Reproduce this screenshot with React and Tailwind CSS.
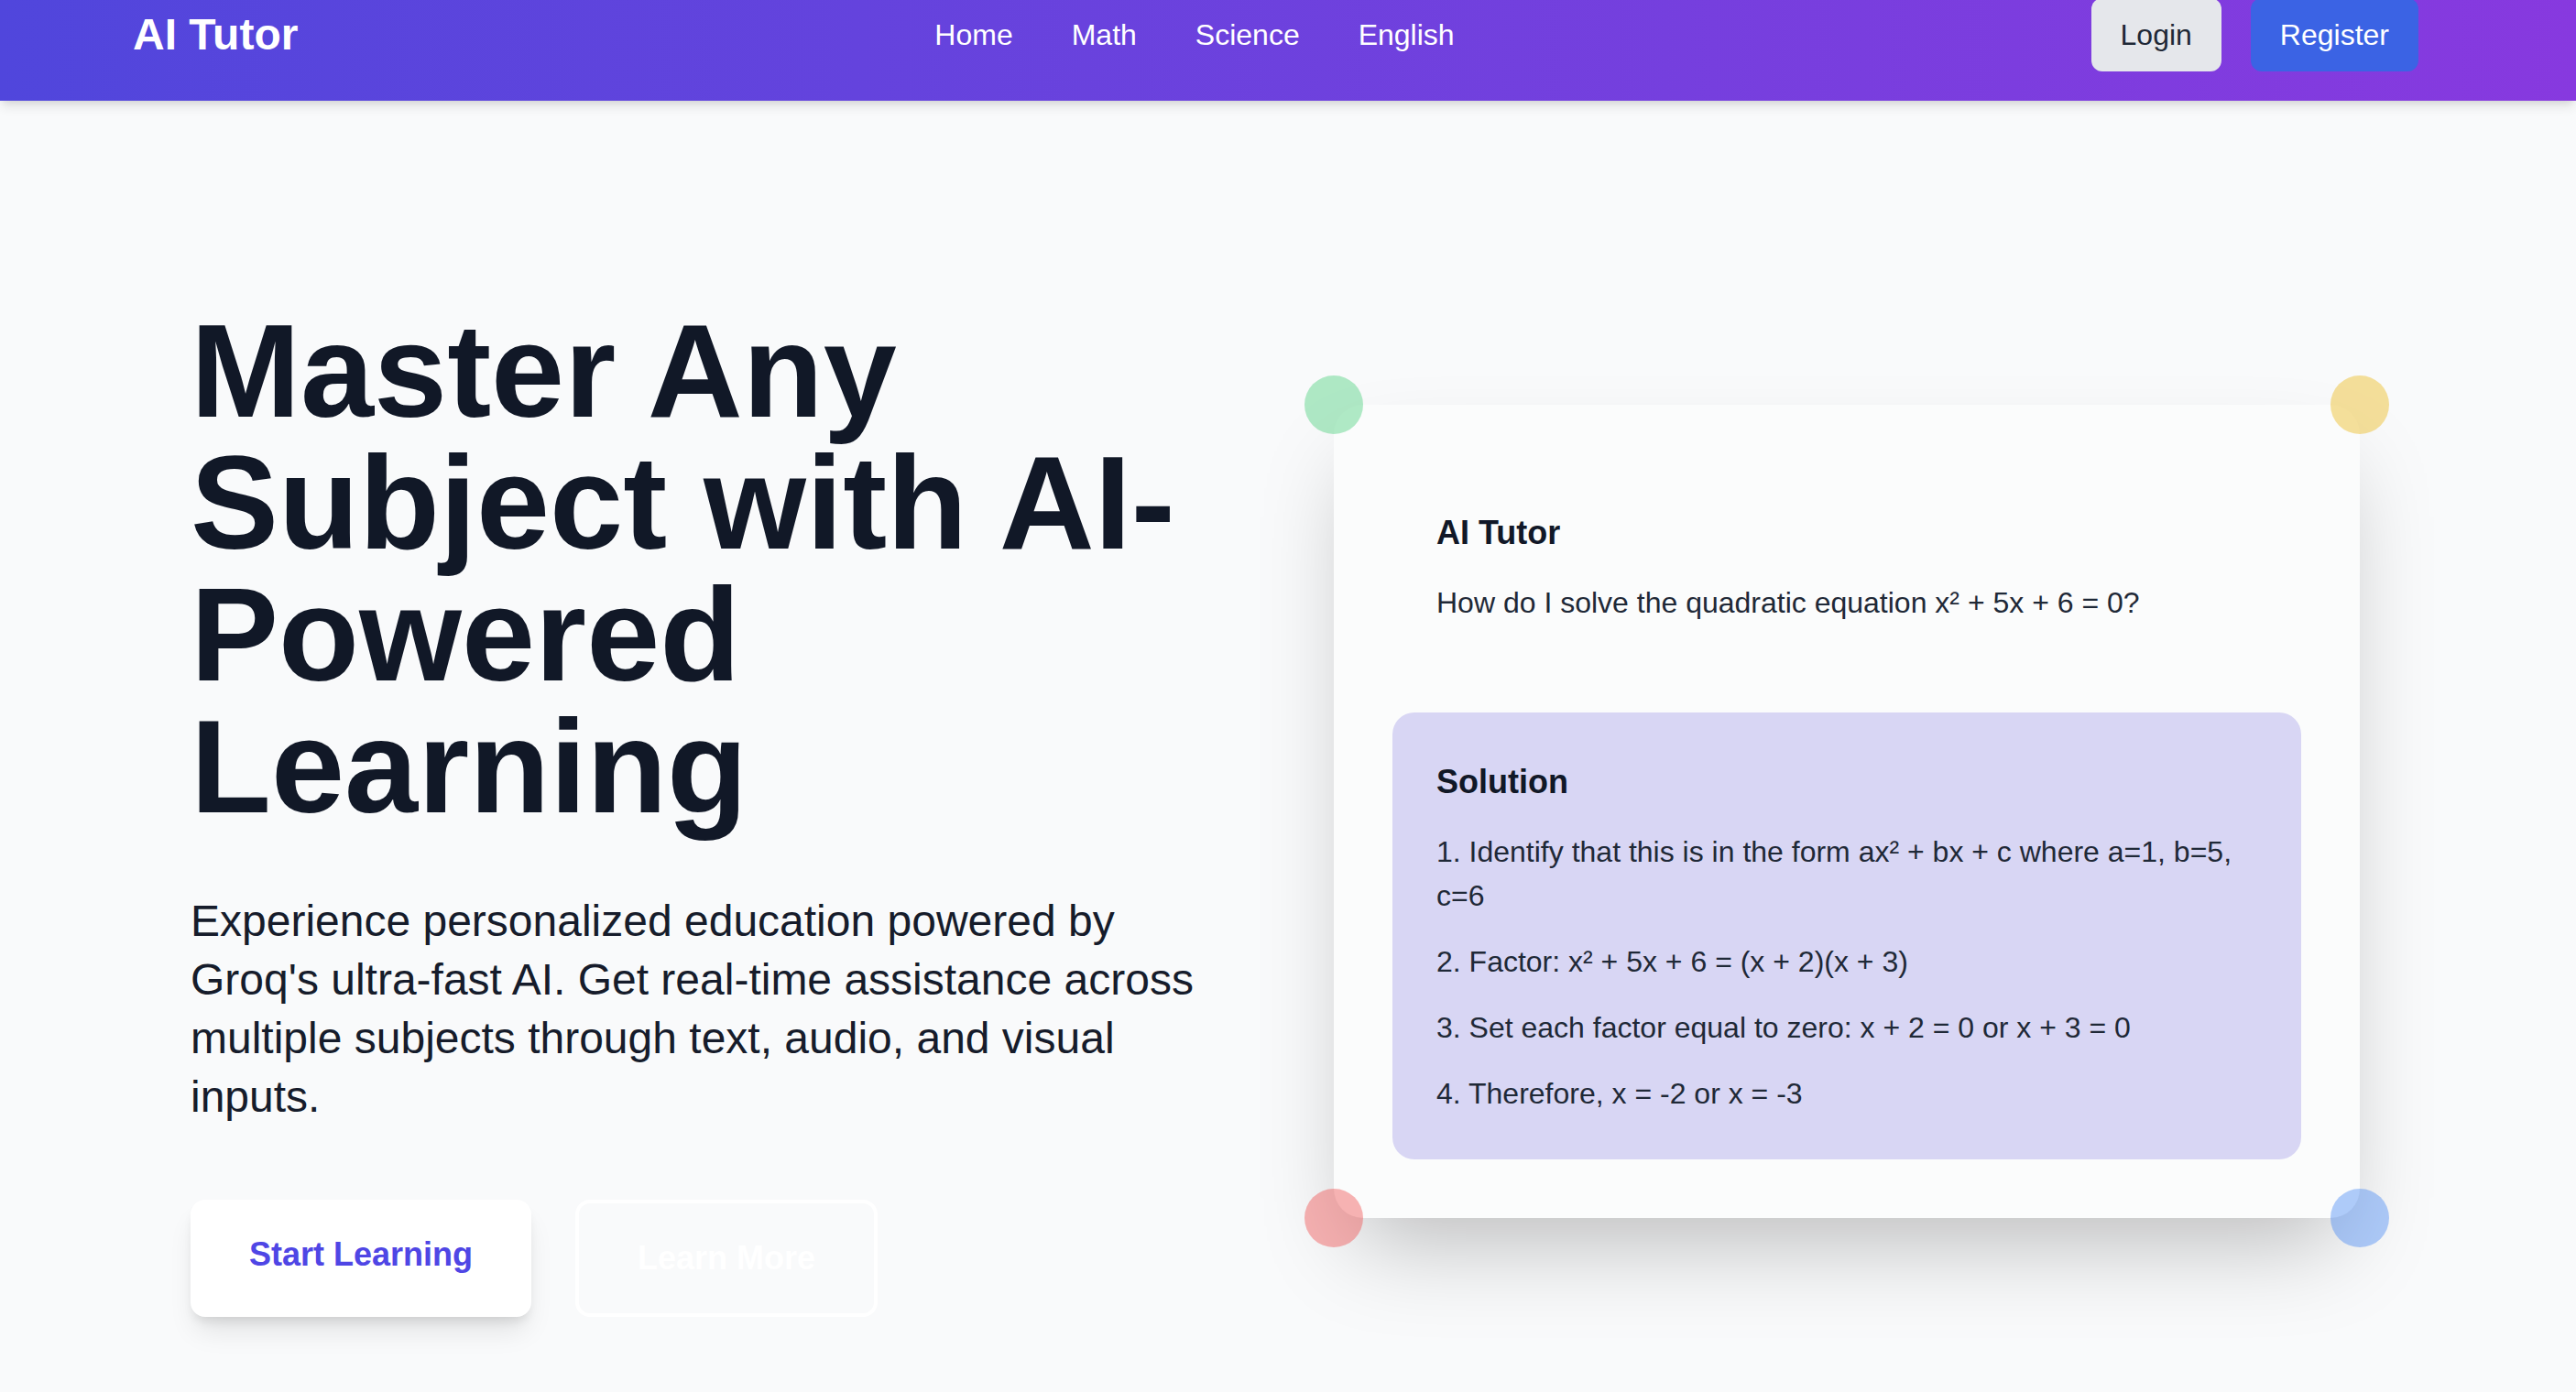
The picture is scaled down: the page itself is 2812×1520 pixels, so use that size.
export default function App() {
  const steps = [
    "1. Identify that this is in the form ax² + bx + c where a=1, b=5, c=6",
    "2. Factor: x² + 5x + 6 = (x + 2)(x + 3)",
    "3. Set each factor equal to zero: x + 2 = 0 or x + 3 = 0",
    "4. Therefore, x = -2 or x = -3",
  ];

  return (
    <div className="min-h-screen bg-[#f9fafb] font-['Liberation_Sans',Arial,sans-serif]">
      {/* top bar */}
      <nav className="relative z-10 h-[110px] overflow-hidden bg-linear-to-r from-[#5046dc] to-[#8739df] shadow-[0_8px_12px_-2px_rgba(0,0,0,0.1),0_4px_8px_-4px_rgba(0,0,0,0.1)]">
        <div className="flex h-[75px] items-center justify-between pl-[145px] pr-[172px]">
          <a href="#" className="text-[48px] font-bold leading-[64px] text-white">
            AI Tutor
          </a>
          <div className="flex gap-[64px] text-[32px] leading-[48px] text-white">
            <a href="#">Home</a>
            <a href="#">Math</a>
            <a href="#">Science</a>
            <a href="#">English</a>
          </div>
          <div className="flex gap-[32px] text-[32px] leading-[48px]">
            <button className="rounded-[12px] bg-[#e5e7eb] px-[32px] py-[16px] text-[#1f2937]">
              Login
            </button>
            <button className="rounded-[12px] bg-[#3b63e4] px-[32px] py-[16px] text-white">
              Register
            </button>
          </div>
        </div>
      </nav>

      {/* hero */}
      <section className="grid grid-cols-2 items-center gap-[128px] pb-[82px] pl-[208px] pr-[236px] pt-[224px]">
        <div>
          <h1 className="mb-[64px] text-[144px] font-bold leading-none text-[#111827]">
            Master Any Subject with AI-Powered Learning
          </h1>
          <p className="text-[48px] leading-[64px] text-[#161c2b]">
            Experience personalized education powered by Groq's ultra-fast AI.
            Get real-time assistance across multiple subjects through text,
            audio, and visual inputs.
          </p>
          <div className="mt-[80px] flex gap-[48px]">
            <button className="rounded-[16px] border-4 border-white bg-white px-[60px] pb-[36px] pt-[28px] text-[36px] font-bold leading-[56px] text-[#4f46e5] shadow-[0_20px_30px_-6px_rgba(0,0,0,0.1),0_8px_12px_-4px_rgba(0,0,0,0.1)]">
              Start Learning
            </button>
            <button className="rounded-[16px] border-4 border-white px-[64px] py-[32px] text-[36px] font-bold leading-[56px] text-white">
              Learn More
            </button>
          </div>
        </div>

        <div className="relative rounded-[32px] bg-[#fbfcfc] p-[64px] shadow-[0_50px_100px_-24px_rgba(0,0,0,0.25)]">
          <div className="mb-[48px] rounded-[24px] bg-[#fbfcfc] p-[48px]">
            <p className="text-[36px] font-bold leading-[56px] text-[#111827]">AI Tutor</p>
            <p className="mt-[24px] text-[32px] leading-[48px] text-[#1f2937]">
              How do I solve the quadratic equation x² + 5x + 6 = 0?
            </p>
          </div>
          <div className="rounded-[24px] bg-[#d8d6f4] p-[48px]">
            <p className="mb-[24px] text-[36px] font-bold leading-[56px] text-[#111827]">Solution</p>
            <div className="flex flex-col gap-[24px] text-[32px] leading-[48px] text-[#1f2937]">
              {steps.map((s) => (
                <p key={s}>{s}</p>
              ))}
            </div>
          </div>

          <span className="absolute -left-[32px] -top-[32px] h-[64px] w-[64px] rounded-full bg-[#22c55e]/35" />
          <span className="absolute -right-[32px] -top-[32px] h-[64px] w-[64px] rounded-full bg-[#eab308]/40" />
          <span className="absolute -bottom-[32px] -left-[32px] h-[64px] w-[64px] rounded-full bg-[#ef4444]/40" />
          <span className="absolute -bottom-[32px] -right-[32px] h-[64px] w-[64px] rounded-full bg-[#3b82f6]/40" />
        </div>
      </section>
    </div>
  );
}
